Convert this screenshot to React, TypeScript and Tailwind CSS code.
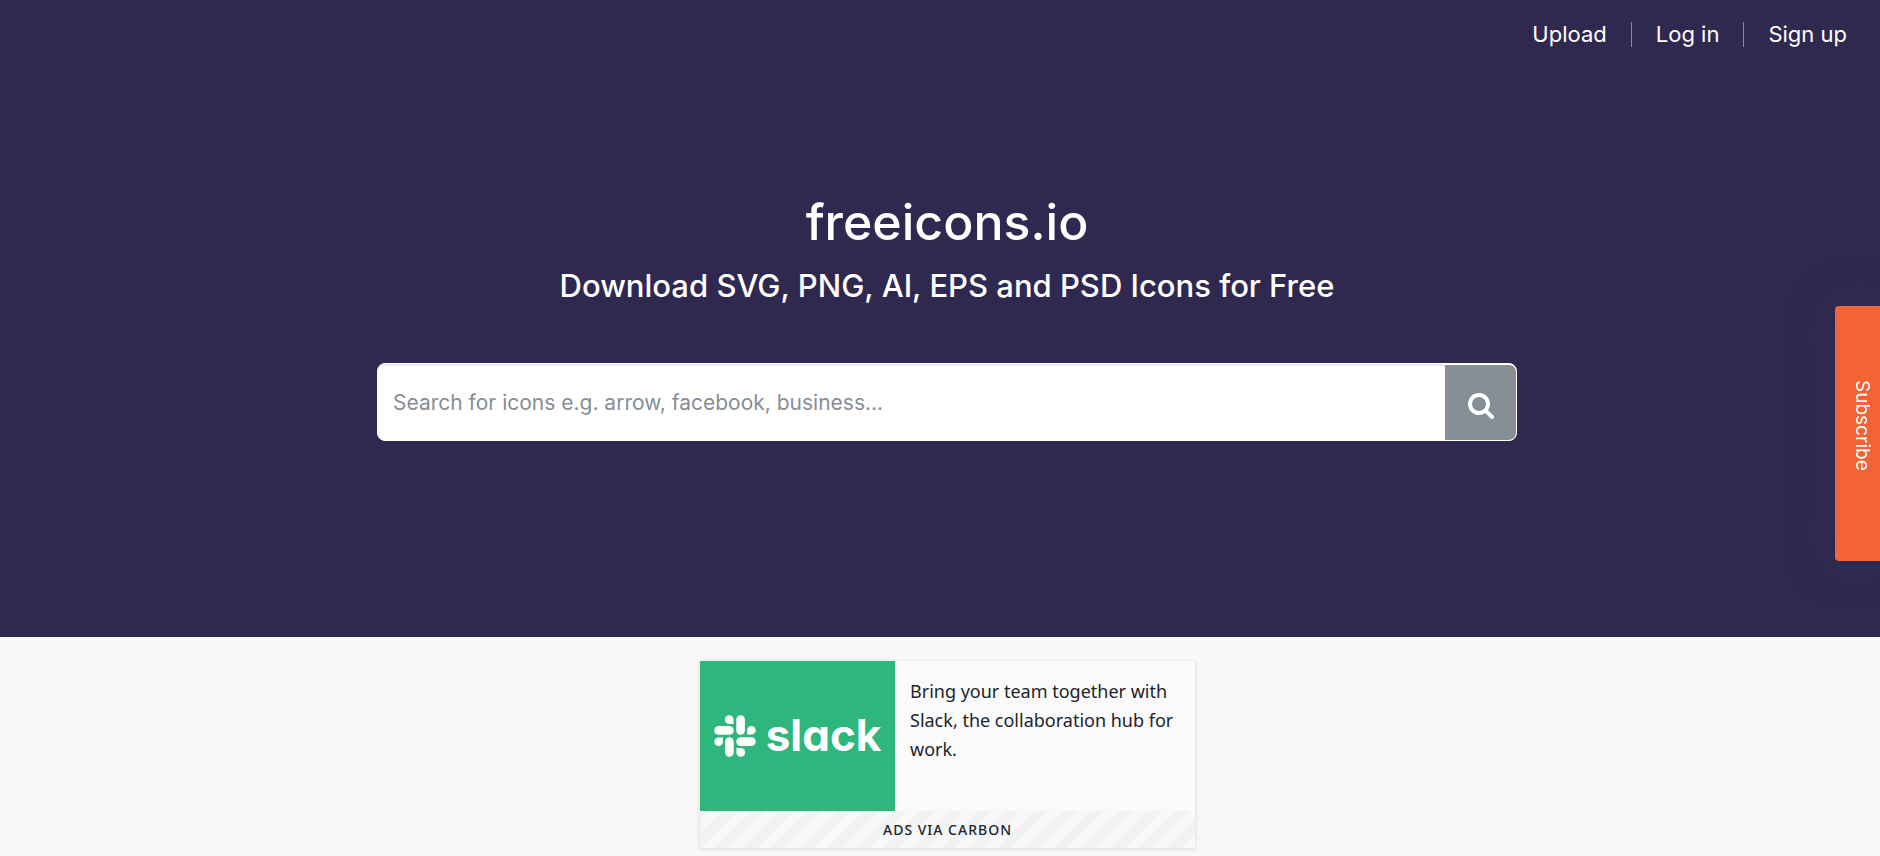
import React from "react";

const navLinks = ["Upload", "Log in", "Sign up"];

function SlackMark() {
  const arm = (
    <>
      <path d="M15.2 0.3a4.2 4.2 0 0 0 0 8.6h4.3V4.6A4.3 4.3 0 0 0 15.2 0.3z" />
      <rect x="0.3" y="11.1" width="19.4" height="8.6" rx="4.3" />
    </>
  );
  return (
    <svg viewBox="0 0 42 42" className="size-[42px] shrink-0 fill-white" aria-hidden="true">
      <g>{arm}</g>
      <g transform="rotate(90 21 21)">{arm}</g>
      <g transform="rotate(180 21 21)">{arm}</g>
      <g transform="rotate(270 21 21)">{arm}</g>
    </svg>
  );
}

function SearchIcon() {
  return (
    <svg viewBox="0 0 1664 1664" className="size-[26px] fill-current" aria-hidden="true">
      <path d="M1152 704q0-185-131.5-316.5t-316.5-131.5-316.5 131.5-131.5 316.5 131.5 316.5 316.5 131.5 316.5-131.5 131.5-316.5zm512 832q0 52-38 90t-90 38q-54 0-90-38l-343-342q-179 124-399 124-143 0-273.5-55.5t-225-150-150-225-55.5-273.5 55.5-273.5 150-225 225-150 273.5-55.5 273.5 55.5 225 150 150 225 55.5 273.5q0 220-124 399l343 343q37 37 37 90z" />
    </svg>
  );
}

function Nav() {
  return (
    <nav className="flex h-[68px] items-center justify-end pr-[33px] text-[22px] leading-[25px] text-white">
      {navLinks.map((label, i) => (
        <React.Fragment key={label}>
          {i > 0 && <span className="mx-6 h-[25px] w-px bg-white/45" />}
          <a href="#">{label}</a>
        </React.Fragment>
      ))}
    </nav>
  );
}

function SearchBar() {
  return (
    <form
      onSubmit={(e) => e.preventDefault()}
      className="flex h-[78px] w-full max-w-[1140px] overflow-hidden rounded-lg border border-white bg-white"
    >
      <input
        type="text"
        aria-label="Search icons"
        placeholder="Search for icons e.g. arrow, facebook, business..."
        className="min-w-0 flex-1 px-[15px] pt-[2px] text-[21px] text-gray-700 shadow-[inset_0_2px_1px_rgba(0,0,0,0.08)] outline-none placeholder:text-[#868e96]"
      />
      <button
        type="submit"
        aria-label="Search"
        className="flex w-[71px] items-center justify-center rounded-r-[7px] border-t border-white bg-[#868e96] pt-1.5 text-white"
      >
        <SearchIcon />
      </button>
    </form>
  );
}

function CarbonAd() {
  return (
    <aside className="w-[495px] bg-[#fafafa] font-['Noto_Sans',sans-serif] text-[#212529] shadow-[0_1px_4px_1px_rgba(0,0,0,0.1)]">
      <div className="flex">
        <a
          href="#"
          aria-label="Slack"
          className="flex h-[150px] w-[195px] shrink-0 items-center justify-center gap-[10px] bg-[#2eb67d] text-white"
        >
          <SlackMark />
          <span className="pb-[2px] font-['Inter',sans-serif] text-[44px] leading-[44px] font-bold [font-feature-settings:'cv11']">
            slack
          </span>
        </a>
        <a href="#" className="block pt-4 pr-3 pl-[15px] text-[18px] leading-[29px]">
          Bring your team together with Slack, the collaboration hub for work.
        </a>
      </div>
      <a
        href="#"
        className="block bg-[#f6f8fa] bg-[repeating-linear-gradient(-45deg,transparent,transparent_10px,rgba(0,0,0,0.025)_10px,rgba(0,0,0,0.025)_20px)] text-center text-[14px] leading-[37px] font-medium tracking-[1px]"
      >
        ADS VIA CARBON
      </a>
    </aside>
  );
}

export default function App() {
  return (
    <div className="min-h-screen overflow-hidden bg-[#f9f9f9] font-['Inter',sans-serif]">
      <header className="bg-[#30294f] pb-[196px]">
        <Nav />
        <div className="flex flex-col items-center pt-[124px] pl-[14px] text-white">
          <h1 className="text-[50px] leading-[60px] font-medium">freeicons.io</h1>
          <h2 className="mt-4 mb-[59px] text-[31px] leading-[36px] font-medium">
            Download SVG, PNG, AI, EPS and PSD Icons for Free
          </h2>
          <SearchBar />
        </div>
      </header>
      <main className="flex justify-center pt-6 pb-2 pl-[15px]">
        <CarbonAd />
      </main>
      <button
        type="button"
        className="fixed top-[306px] right-0 flex h-[255px] w-[45px] items-center justify-start rounded-l bg-[#f26435] pt-[74px] pl-2 text-[19px] leading-[20px] text-white shadow-[0_0_40px_rgba(44,48,80,0.8)] [writing-mode:vertical-rl]"
      >
        Subscribe
      </button>
    </div>
  );
}
